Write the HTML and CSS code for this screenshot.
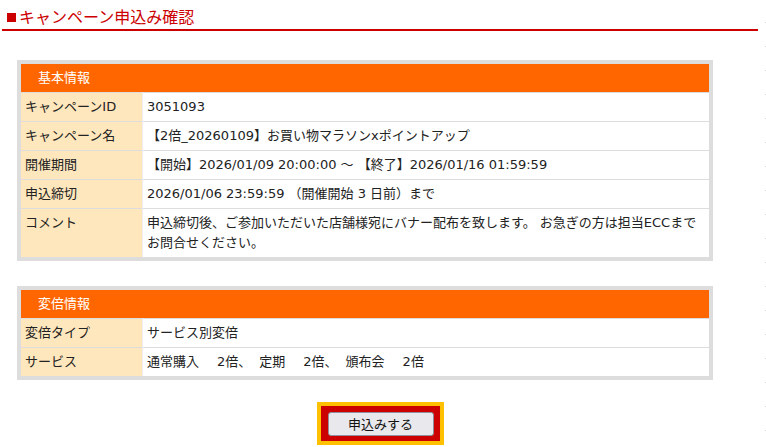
FILE: index.html
```html
<!DOCTYPE html>
<html lang="ja">
<head>
<meta charset="utf-8">
<title>キャンペーン申込み確認</title>
<link rel="stylesheet" href="styles.css">
</head>
<body>
<div class="page">
  <h1 class="title"><span class="title-mark"></span>キャンペーン申込み確認</h1>

  <div class="box box-first">
    <div class="box-head">基本情報</div>
    <table class="info">
      <tr><th>キャンペーンID</th><td>3051093</td></tr>
      <tr><th>キャンペーン名</th><td>【2倍_20260109】お買い物マラソンxポイントアップ</td></tr>
      <tr><th>開催期間</th><td>【開始】2026/01/09 20:00:00 ～ 【終了】2026/01/16 01:59:59</td></tr>
      <tr><th>申込締切</th><td>2026/01/06 23:59:59 （開催開始 3 日前）まで</td></tr>
      <tr><th>コメント</th><td>申込締切後、ご参加いただいた店舗様宛にバナー配布を致します。 お急ぎの方は担当ECCまで<br>お問合せください。</td></tr>
    </table>
  </div>

  <div class="box box-second">
    <div class="box-head">変倍情報</div>
    <table class="info">
      <tr><th>変倍タイプ</th><td>サービス別変倍</td></tr>
      <tr><th>サービス</th><td><span class="svc-name">通常購入</span><span class="svc-rate">2倍、</span><span class="svc-name">定期</span><span class="svc-rate">2倍、</span><span class="svc-name">頒布会</span><span class="svc-rate">2倍</span></td></tr>
    </table>
  </div>

  <div class="actions">
    <div class="btn-frame">
      <button class="btn" type="button">申込みする</button>
    </div>
  </div>
</div>
</body>
</html>
```

FILE: styles.css
```css
html {
  background-color: #fff;
  background-image: linear-gradient(to bottom, #d8d8d8 1px, transparent 1px);
  background-size: 1px 24px;
  background-repeat: repeat-y;
  background-position: right 0 top 22px;
  min-height: 100%;
}

body {
  margin: 0;
  font-family: "DejaVu Sans", "Noto Sans CJK JP", sans-serif;
  font-size: 13px;
  color: #222;
}

.page {
  width: 756px;
  margin-left: 2px;
}

.title {
  margin: 0;
  padding: 3px 0 0 5px;
  height: 26px;
  border-bottom: 2px solid #cc0000;
  font-family: "Noto Sans CJK JP", sans-serif;
  font-size: 16px;
  font-weight: normal;
  line-height: 22px;
  color: #cc0000;
  display: flex;
  align-items: center;
}

.title-mark {
  display: inline-block;
  width: 9px;
  height: 9px;
  background: #cc0000;
  margin-right: 3px;
  position: relative;
  top: 1px;
}

.box {
  width: 688px;
  margin-left: 15px;
  border: 4px solid #dddddd;
  background: #fff;
}

.box-first {
  margin-top: 29px;
}

.box-second {
  margin-top: 25px;
}

.box-head {
  height: 28px;
  line-height: 28px;
  background: #ff6600;
  color: #fff;
  padding-left: 17px;
}

.info {
  width: 100%;
  border-collapse: collapse;
}

.info th,
.info td {
  border-top: 1px solid #dddddd;
  padding: 4px 4px;
  line-height: 20px;
  text-align: left;
  vertical-align: top;
  font-weight: normal;
}

.info th {
  width: 113px;
  background: #ffe7bd;
  border-right: 1px solid #eeeeee;
}

.info td {
  background: #fff;
}

.svc-name {
  margin-right: 18px;
}

.svc-rate {
  margin-right: 8px;
}

.svc-rate:last-child {
  margin-right: 0;
}

.actions {
  display: flex;
  justify-content: center;
  margin-top: 22px;
}

.btn-frame {
  border: 4px solid #ffc000;
  background: #cc0000;
  padding: 6px 6px 5px 7px;
}

.btn {
  display: block;
  width: 106px;
  height: 24px;
  padding: 0;
  border: 1px solid #8f8f9d;
  border-radius: 3px;
  background: #e9e9ed;
  font-family: "Noto Sans CJK JP", sans-serif;
  font-size: 13px;
  color: #111;
  line-height: 22px;
}
```
